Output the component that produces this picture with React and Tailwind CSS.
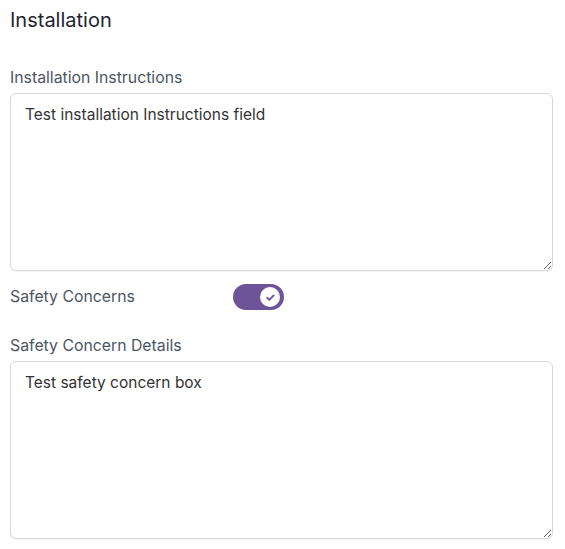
import React, { useState } from 'react';

const Field = ({ label, value }) => (
  <div className="flex flex-col">
    <label className="text-[15.8px] leading-5 text-[#4b5563] mb-[5px]">{label}</label>
    <textarea
      defaultValue={value}
      className="w-full h-[178px] rounded-md border border-[#d6d8de] bg-white px-[14px] pt-[9px] text-[15.5px] leading-6 text-[#333333] shadow-[0_1px_1px_rgba(0,0,0,0.04)] outline-none resize-y"
    />
  </div>
);

const App = () => {
  const [on, setOn] = useState(true);

  return (
    <div className="bg-white min-h-screen pl-[10px] pr-[12px] pt-[6px] font-['Inter','Noto_Sans',sans-serif]">
      <h2 className="text-[20px] leading-7 text-[#1f2430] mb-[34px]">Installation</h2>

      <Field label="Installation Instructions" value="Test installation Instructions field" />

      <div className="flex items-center h-[26px] mt-[13px] mb-[26px]">
        <span className="w-[223px] text-[15.8px] text-[#4b5563]">Safety Concerns</span>
        <button
          onClick={() => setOn(!on)}
          className="relative w-[51px] h-[26px] rounded-full bg-[#6d5499] flex items-center"
        >
          <span className="absolute right-[4px] w-[20px] h-[20px] rounded-full bg-white flex items-center justify-center">
            <svg width="11" height="11" viewBox="0 0 24 24" fill="none" stroke="#6d5499" strokeWidth="4" strokeLinecap="round" strokeLinejoin="round">
              <path d="M5 12.5l4.5 4.5L19 7.5" />
            </svg>
          </span>
        </button>
      </div>

      <Field label="Safety Concern Details" value="Test safety concern box" />
    </div>
  );
};

export default App;
